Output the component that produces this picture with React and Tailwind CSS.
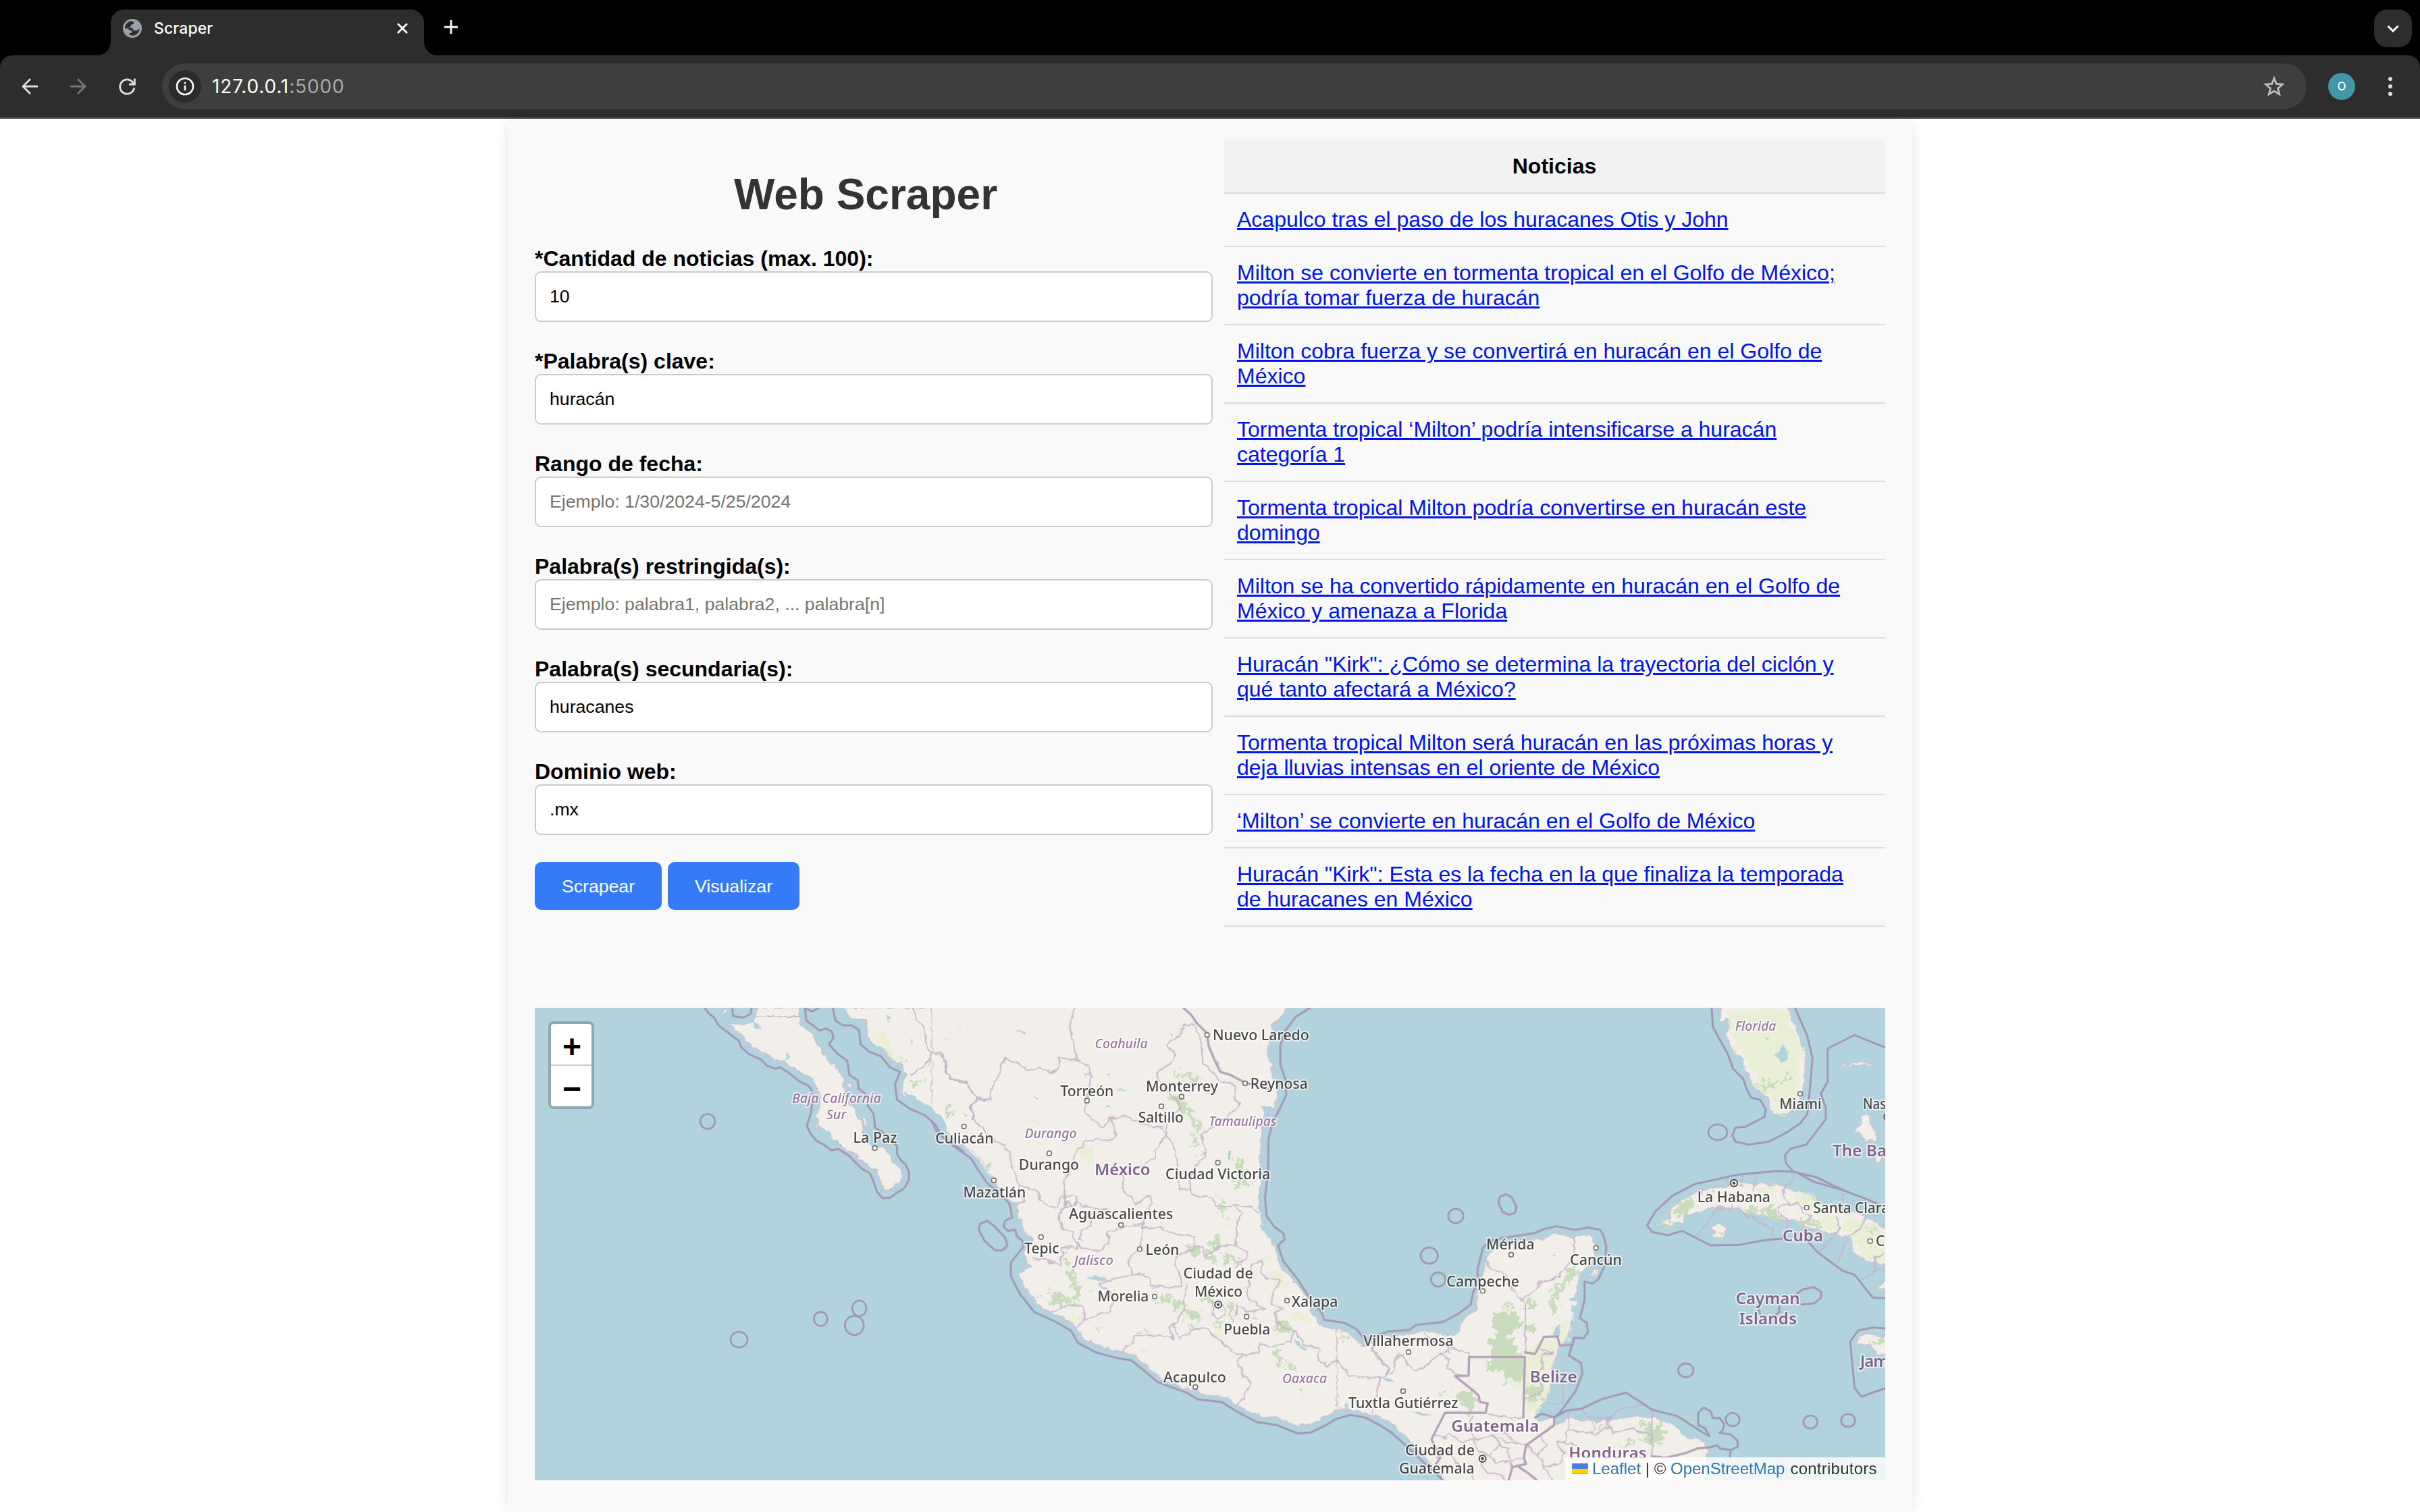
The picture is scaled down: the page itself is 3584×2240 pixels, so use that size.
import React from "react";

const WATER = "#b2d2dd";
const LAND = "#f2efea";

/* The map is charted in four overlapping sheets, each with its own grid. */
const SHEETS = {
  west: { x: -12, y: -13, sx: 0.43367, sy: 0.45918 },
  central: { x: 588, y: -13, sx: 0.43367, sy: 0.45918 },
  yucatan: { x: 1208, y: -13, sx: 0.33333, sy: 0.45918 },
  carib: { x: 1608, y: -13, sx: 0.33333, sy: 0.45918 },
};

const landmass = {
  west: [
    "M790 28H930L935 80 975 110 990 145 1012 170 1030 195 1050 215 1068 235 1080 265 1083 300 1100 340 1120 355 1135 385 1150 405 1148 430 1165 460 1180 485 1200 475 1215 480 1240 500 1255 530 1275 545 1282 570 1275 592 1250 605 1228 622 1212 605 1205 570 1190 548 1150 530 1110 495 1060 465 1020 440 995 405 990 380 1000 350 1003 310 990 275 965 250 920 230 885 200 850 200 825 180 790 165 750 140 745 122 690 85 720 80 745 85 775 72 785 55Z",
    "M1080 28L1105 60 1160 72 1158 110 1165 125 1200 155 1230 170 1245 195 1275 205 1300 245 1285 270 1283 310 1330 340 1380 360 1420 400 1470 460 1510 490 1550 530 1600 600V28Z",
    "M664 46L668 36 678 28 681 50 668 50Z",
    "M984 412L992 385 996 388 990 414Z",
    "M1095 282L1105 272 1112 280 1104 290Z",
    "M1146 385L1158 385 1162 405 1154 402Z",
  ],
  central: [
    "M0 20V365L25 390 45 410 50 425 90 460 140 490 170 525 200 570 225 600 250 640 285 655 300 710 320 755 345 770 335 790 315 820 320 845 340 860 325 872 295 885 310 925 350 965 375 1000 430 1020 495 1055 520 1100 600 1125 690 1150 740 1190 800 1235 880 1260 960 1280 1020 1290 1045 1310 1120 1345 1180 1350 1250 1378 1290 1375 1335 1352 1380 1330 1405 1318 1440 1320 1500 1330 1568 1365V1115L1530 1115 1470 1120 1445 1100 1410 1075 1370 1065 1330 1055 1300 1020 1285 970 1245 920 1195 870 1170 800 1150 760 1122 710 1118 650 1122 580 1122 500 1125 420 1140 370 1165 350 1185 305 1175 270 1160 230 1145 170 1155 120 1165 80 1190 60 1215 28V20Z",
  ],
  yucatan: [
    "M-60 1060L-10 1075 52 1120 100 1110 150 1090 250 1085 330 1070 400 1080 440 1060 490 1045 560 1000 570 940 590 880 608 830 640 800 700 790 760 778 830 778 915 755 985 770 1060 760 1090 790 1085 840 1040 870 1010 910 1000 960 1010 980 985 1030 965 1090 930 1115 905 1170 890 1230 870 1290 820 1335 840 1360 890 1355 905 1350 920 1375 970 1350 1060 1365 1150 1360 1240 1345 1340 1350 1430 1370 1480 1400 1570 1430 1582 1450 1575 1570H430L345 1490 260 1420 180 1368 120 1345-60 1315Z",
    "M1065 895L1080 872 1104 868 1085 895Z",
  ],
  carib: [
    "M445 20V50L440 75 470 60 495 75 480 95 465 110 480 140 510 175 535 195 550 230 575 245 585 285 640 300 665 345 680 375 750 370 790 350 805 315 820 240 820 180 795 130 770 80 740 20Z",
    "M150 728L225 710 225 680 260 650 340 625 400 610 480 605 530 590 600 598 650 600 720 600 770 620 830 630 880 660 960 675 1000 695 1060 690 1120 715 1180 745V855L1120 850 1070 835 1035 815 1020 765 980 760 900 750 830 735 790 715 720 710 660 700 600 690 550 690 530 675 440 670 400 672 350 690 290 695 280 720 255 720 230 730Z",
    "M402 738L440 722 470 742 462 770 405 768 420 752Z",
    "M1050 1108L1060 1090 1080 1085 1180 1088V1150L1140 1145 1110 1115 1060 1112Z",
    "M1070 372L1100 378 1115 410 1135 430 1130 460 1090 455 1065 435 1035 430 1065 410Z",
    "M965 205L1005 218 1040 204 1105 203 1122 218 1098 209 1040 213 1000 223Z",
    "M1130 505L1165 510 1155 530 1135 525Z",
    "M1140 935L1160 920 1180 905V940Z",
  ],
};

const woods = {
  west: ["M1305 275L1325 265 1345 258 1350 268 1330 282 1308 282Z", "M1435 345L1447 340 1450 372 1440 385 1428 370Z", "M1465 88L1480 88 1478 96Z", "M1280 195L1293 193 1290 205Z", "M1434 128L1444 128 1440 136Z"],
  central: [
    "M50 350L66 340 68 375 60 392 50 375Z", "M175 530L195 525 203 550 180 548Z",
    "M850 225L870 240 905 250 915 262 895 268 860 258Z", "M830 222L845 240 850 262 835 245Z",
    "M800 310L830 312 870 330 890 365 915 410 920 440 900 425 880 385 850 355 820 335Z",
    "M1040 508L1055 525 1070 555 1090 570 1085 605 1035 600 1030 585 1050 575 1035 545Z",
    "M978 625L992 650 1002 690 1002 728 990 690Z", "M905 495L925 500 915 522Z", "M888 435L910 460 912 480 893 460Z",
    "M865 805L900 790 925 800 930 820 890 822Z", "M945 785L965 755 985 775 980 808 955 805Z", "M985 815L1010 825 1055 840 1060 862 1010 850Z", "M940 815L970 820 975 840 945 845 925 830Z",
    "M445 840L470 850 470 866 450 862Z", "M465 880L490 880 498 920 512 960 490 985 478 950 482 920 465 900Z",
    "M400 940L430 945 450 958 475 962 478 985 430 985 395 972 420 962Z", "M345 960L375 962 365 970Z",
    "M775 950L800 945 812 965 800 1000 780 985 790 965Z", "M815 960L855 965 860 985 830 1005Z", "M760 975L775 980 765 990Z",
    "M870 1005L905 1005 935 1025 915 1038 885 1030Z", "M875 1055L905 1050 890 1072Z", "M850 1040L868 1045 860 1055Z",
    "M925 940L960 960 965 990 935 985Z", "M1015 975L1030 990 1032 1035 1020 1040 1010 1005Z",
    "M960 1040L985 1045 985 1070 968 1060Z",
    "M1170 1015L1195 1035 1235 1050 1230 1080 1180 1065Z", "M1172 1122L1190 1130 1198 1188 1178 1180Z",
    "M1200 1165L1235 1175 1245 1205 1225 1200Z", "M1238 1248L1272 1258 1265 1272Z", "M725 1060L752 1070 740 1080Z",
    "M560 1058L582 1062 570 1070Z", "M710 1142L735 1145 720 1150Z", "M1385 1078L1430 1095 1425 1102Z",
    "M540 938L558 940 545 944Z", "M1080 940L1100 952 1085 958Z", "M1100 1020L1120 1030 1105 1035Z",
  ],
  yucatan: [
    "M630 1045L640 1012 680 1010 700 1005 750 1020 755 1050 730 1080 705 1085 725 1110 750 1150 775 1165V1230H700L660 1195 625 1210 600 1195 625 1160 620 1100 655 1090 655 1075 630 1060Z",
    "M680 990L710 975 728 985 700 1000Z",
    "M470 1270L515 1260 562 1290 562 1310 530 1335 500 1322 500 1305 480 1300Z",
    "M780 968L828 972 826 992 795 1015 780 1012Z",
    "M945 885L1000 860 1022 878 985 905 960 925 945 905Z",
    "M925 915L955 930 935 945 920 965 890 965 890 945 915 935Z", "M880 968L920 970 915 990 920 1005 905 1022 880 1020 895 995Z",
    "M780 1045L820 1060 815 1082 780 1075Z", "M380 1262L422 1266 412 1273Z", "M885 820L918 822 900 825Z",
    "M1330 1365L1395 1385 1390 1420 1360 1440 1310 1430 1305 1405Z", "M1290 1370L1325 1358 1300 1395 1280 1405Z",
    "M1200 1445L1280 1410 1270 1425 1230 1450Z", "M1060 1385L1130 1372 1125 1380 1080 1392Z", "M1068 895L1082 875 1100 872 1085 893Z", "M1490 1350L1530 1355 1500 1360Z",
    "M780 1250L850 1240 850 1290 800 1310 780 1290Z",
  ],
  carib: [
    "M600 275L640 265 700 275 680 290 630 285Z", "M715 250L745 242 762 258 730 270Z", "M755 178L785 182 770 190Z",
    "M235 685L250 665 300 640 325 635 325 670 275 695 245 698Z", "M150 730L215 712 250 720 235 725 205 738 210 722Z",
    "M535 668L620 680 690 672 700 690 735 705 680 708 620 692 560 692Z", "M780 715L810 702 850 722 890 715 885 738 820 732Z",
    "M395 768L430 762 470 765 440 772Z", "M1095 745L1140 740 1130 765Z", "M1110 1100L1176 1095 1176 1110 1125 1115Z", "M1140 940L1176 930 1176 942Z", "M380 620L420 612 415 628Z",
  ],
};

const meadows = {
  west: ["M1180 110L1230 100 1240 150 1270 195 1245 195 1225 160 1190 140Z"],
  central: ["M480 490L520 470 555 485 550 525 510 515Z", "M335 375L365 390 380 410 345 400Z", "M1150 885L1180 880 1215 900 1225 930 1195 940 1165 905Z", "M1110 820L1150 828 1160 850 1130 850Z", "M1220 1010L1290 1020 1300 1035 1240 1040Z", "M970 1065L995 1070 990 1092 970 1085Z", "M480 1020L512 1025 505 1055 490 1045Z", "M840 980L870 985 880 1020 850 1025Z"],
  yucatan: [
    "M780 1140L850 1100 920 1095 900 1170 890 1230 865 1295 800 1345 775 1340Z",
    "M925 1035L980 1035 965 1090 945 1110 925 1080 900 1075 880 1080 905 1045Z",
    "M700 1230H770V1265L720 1245Z",
  ],
  carib: [
    "M470 40L560 35 680 28 740 35 760 90 790 140 805 170 790 240 790 290 760 340 700 370 680 360 670 320 600 290 590 260 620 250 560 215 560 190 520 160 500 120Z",
    "M700 235L780 245 770 290 745 310 700 325 680 320 730 290Z",
    "M600 610L680 602 700 640 640 640Z", "M780 625L860 640 900 670 890 690 800 650Z", "M1000 700L1176 750 1176 850 1100 840 1050 815 1030 770 990 755Z",
    "M880 690L960 700 960 750 900 745Z",
  ],
};

const lakes = {
  west: ["M768 60L785 80 805 88 803 97 778 92Z", "M888 172L895 190 882 200Z", "M1022 182L1045 210 1040 220 1025 200Z", "M1230 50L1245 62 1236 78Z", "M1370 190L1380 195 1374 222Z", "M1285 300L1350 330 1420 380 1435 415 1420 420 1370 360 1300 325Z", "M1000 410L1030 425 1045 450 1015 440Z", "M1310 130L1325 142 1318 147Z", "M1490 360L1502 372 1495 378Z"],
  central: ["M0 355L45 395 45 415 20 395Z", "M285 105H320L312 113Z", "M625 293H675L650 297Z", "M590 345H610V350H590Z", "M527 900L560 893 605 900 590 908 545 907Z", "M1240 1095L1282 1130 1275 1140 1240 1110Z", "M350 305L362 328 355 330Z", "M1010 490L1022 490 1022 515 1012 520Z", "M1125 345L1150 345 1165 350 1140 372Z", "M1120 720L1165 765 1160 775 1125 745Z", "M968 195L980 205 975 220Z", "M690 1075L712 1070 708 1078Z", "M305 850L338 855 325 870 305 868Z", "M750 928L785 930 780 936H755Z", "M812 110L826 115 820 122Z", "M595 240H610V245H595Z", "M525 240H540V245H525Z", "M445 815L462 812 462 820Z", "M1405 1310L1420 1302 1420 1325Z"],
  yucatan: ["M405 1080L445 1060 490 1048 490 1070 460 1085 410 1088Z", "M900 1080L915 1055 932 1048 930 1085 915 1090Z", "M135 1225L190 1225 192 1235 150 1230Z", "M670 1242L702 1240 680 1247Z", "M820 1345L850 1345 860 1365 835 1370Z", "M970 965L1010 965 1000 980 975 975Z", "M980 992L1005 990 1000 1008 985 1008Z", "M1460 1385L1500 1400 1500 1415 1465 1400Z", "M260 1330L330 1335 360 1350 300 1338Z"],
  carib: ["M680 177L708 168 715 150 725 155 745 175 740 195 715 205Z", "M640 125L655 122 652 135Z", "M1020 660L1070 665 1150 720 1120 715 1060 685Z", "M520 175L545 185 545 205 560 225 535 210Z", "M260 1385L290 1400 330 1410 325 1420 270 1405Z"],
};

const regional = {
  west: ["M790 57H930", "M1320 28L1322 50 1345 80 1360 105 1370 165 1385 175 1360 215 1340 225 1310 245", "M1385 175L1410 170 1430 200 1435 235 1450 262 1500 270 1520 300 1545 322 1568 325", "M1545 322L1517 340 1525 385 1568 430"],
  central: [
    "M490 28L472 70 480 110 487 160 495 195 437 190 430 220 410 240 390 228 365 225 330 230 290 208 250 190 235 220 225 260 205 285 200 325 155 318 130 285 115 265 65 262 45 210 40 190 25 180 0 165",
    "M155 318L133 340 140 385 185 430 215 460 250 470 265 505 275 545 290 580 300 600 300 635 320 655 290 658",
    "M495 195L535 215 545 255 535 290 530 340 520 360 560 400 585 415 610 385 660 380 700 395 740 405 785 415 800 440",
    "M610 385L625 410 628 450 525 458 500 490 485 505 485 545 455 570 450 620 460 660 430 715",
    "M800 440L785 460 760 490 760 510 720 540 650 565 655 620 695 660 715 655 745 635 750 660 720 725",
    "M800 440L830 480 835 550 845 610 880 615",
    "M905 95L890 82 860 85 845 120 805 145 805 160 830 170 825 200 765 240 800 290 850 350 800 400 805 440",
    "M905 95L920 150 925 200 950 230 985 265 1035 275 1037 330 1052 340 990 395 920 435 930 490 940 510 905 530 880 580 885 630 960 645 970 670 1030 670 1080 665 1115 690",
    "M1030 670L1060 690 1040 720 1045 760 1035 795 1080 820 1070 840 1045 850 1040 865",
    "M720 735L770 738 800 745 835 760 895 765 900 800 930 800 930 830 980 800 1035 795",
    "M300 600L360 620 370 650 400 670 430 670 440 640 490 635 495 660 440 680 430 715 450 740 480 750 490 785 500 805 445 800 440 860 380 840 340 840",
    "M490 785L515 805 565 812 605 790 600 750 640 740 720 725 715 790 680 830 670 850 685 890 740 895 745 920 790 930 850 930 850 895 830 860 835 830 900 800",
    "M540 690L545 730 510 750 500 775 518 780", "M450 640L475 670 500 650 515 668 545 672 600 680",
    "M685 890L610 905 570 920 610 945 620 980 600 1010 565 1020 525 1035 495 1055",
    "M410 1010L460 990 520 990 520 1035",
    "M870 920L860 990 840 1040 810 1055 825 1095 780 1085 690 1085 690 1105 660 1125 655 1140",
    "M820 1048L845 1095 900 1065 940 1060 960 1090 990 1100 1000 1120 1040 1145 1060 1150 1045 1165 1060 1210 1090 1240 1060 1290 1040 1310",
    "M1060 1150L1115 1140 1120 1110 1150 1125 1225 1105 1235 1070 1200 1060 1175 1040 1175 1010 1200 1000 1165 985 1165 950 1190 910 1150 905 1120 880 1130 845 1095 860 1080 930 1075 960 1135 1000 1080 1010 1040 985 1040 1020",
    "M1235 1070L1280 1120 1325 1125 1320 1165 1350 1185 1385 1165 1425 1215 1530 1225 1505 1330",
    "M960 970L960 1020 975 1030 1000 1020 995 985",
    "M1508 1110L1515 1150 1560 1190 1555 1215 1530 1225",
  ],
  yucatan: [
    "M100 1130L165 1190 160 1210 190 1200 210 1145 240 1145 250 1180 290 1200 340 1180 400 1145 440 1140V1120",
    "M390 1145L440 1165 430 1190 490 1215", "M325 1075L360 1100 440 1125 525 1142V1155",
    "M715 935L760 970 778 985V1140", "M760 970L820 940 850 910 925 895 975 850", "M998 770V820", "M608 830V860L650 880 690 885 715 935",
    "M945 1245V1305H880", "M835 1125L900 1140 850 1150 850 1190 835 1220 860 1260 780 1290", "M850 1150L905 1135",
    "M1025 1322L1050 1345 1150 1357 1190 1322 1310 1308", "M1340 1325V1475", "M970 1330L965 1390 945 1430 1010 1440",
    "M965 1390L1060 1400 1110 1400 1150 1380 1140 1360", "M1150 1380L1170 1400 1240 1385 1340 1410",
    "M360 1410L420 1415 440 1400 500 1430 550 1420 640 1410 700 1430 780 1440", "M550 1420L570 1460 620 1470 660 1440 640 1410", "M620 1470L650 1500 700 1490 720 1510",
    "M380 1480L440 1460 470 1500 530 1520 560 1560", "M540 1345L520 1390 560 1415", "M610 1340L690 1350 760 1350", "M580 1500L610 1530 660 1530 700 1560",
    "M780 1440L830 1470 870 1440 840 1410 905 1375", "M830 1470L860 1510 920 1500 950 1470 920 1430 945 1430", "M860 1510L900 1550", "M700 1370L680 1400 740 1430", "M660 1440L700 1450 710 1490 760 1480",
  ],
  carib: [
    "M355 595L363 630 340 625", "M345 765L425 678H495V665", "M470 575L480 600 540 605V570", "M530 685L675 742V775", "M598 565V598L590 620",
    "M767 562L765 590 725 610 730 640 755 665 700 670V690L740 710 742 740", "M755 665L790 655 810 690 850 700 820 720 810 760", "M960 700L970 740 940 770 885 820",
    "M1090 705L1060 745 1010 765 960 855", "M990 617L988 650", "M1176 815L1130 840 1127 875H1176", "M1127 875L1065 912",
  ],
};

const international = {
  central: ["M858 28L885 50 905 78 940 110 945 150 965 195 985 235 1020 245 1070 270 1150 290"],
  yucatan: [
    "M465 1217L525 1215 527 1155H775L768 1350", "M465 1217L540 1260 570 1280 575 1300 610 1305 600 1335H420L360 1420 400 1480 380 1500",
    "M775 1140L820 1145 860 1090 920 1088 930 1118 990 1115", "M905 1350L905 1375 780 1440 770 1480 780 1500 720 1510 700 1560", "M740 1505L790 1530 840 1560",
    "M1340 1475L1400 1480 1490 1465 1540 1450 1585 1448",
  ],
};

const maritime = {
  west: [
    "M608 28L620 45 640 60 655 85 690 110 725 135 732 155 760 178 800 195 820 215 850 225 865 220 895 238 930 265 960 278 972 292 978 320 970 370 957 410 970 435 990 458 1015 470 1040 488 1065 484 1100 505 1145 548 1172 562 1185 590 1195 620 1215 642 1240 642 1262 627 1290 610 1305 585 1306 560 1295 535 1278 520 1265 500V475L1245 455 1215 430 1190 415 1185 370 1165 345 1162 310 1135 290 1130 262 1102 245 1095 200 1060 175 1032 145 1048 125 1042 105 1022 95 1000 102 985 90 955 70 950 28",
    "M1045 28L1055 70 1080 85 1110 85 1135 100 1140 145 1170 170 1210 185 1240 220 1275 235 1258 275 1265 325 1310 355 1360 375 1395 405 1420 445 1490 490",
    "M702 28L705 55 740 60 765 48 768 28", "M955 32L975 40 998 28",
  ],
  central: [
    "M0 395L15 425 75 475 135 515 160 555 190 595 235 630 265 660 275 705 250 715 245 735 260 748 285 745 290 765 310 780 312 800 270 850 270 895 300 950 350 1010 420 1040 475 1070 500 1110 560 1140 640 1160 680 1165 720 1195 770 1235 870 1270 910 1292 990 1300 1040 1330 1110 1365 1180 1375 1250 1402 1295 1398 1340 1378 1380 1355 1430 1342 1480 1350 1530 1375 1568 1398",
    "M1292 28L1240 60 1205 105 1190 150V210L1208 260 1210 310 1190 350 1165 395 1150 450 1148 560 1138 640 1143 700 1170 735 1200 755 1205 775 1182 795 1200 845 1250 905 1290 965 1330 1010 1340 1035 1410 1045 1450 1065 1480 1100",
    "M160 745L165 725 190 715 215 735 250 770 258 795 240 812 215 810 180 780Z",
  ],
  yucatan: [
    "M180 1398L260 1450 340 1505 430 1565",
    "M66 1100L120 1085 170 1072 260 1068 290 1052 410 1042 480 1015 535 985 545 945 565 920V870L590 800 640 775 820 755 860 742 915 733 1000 745 1055 737 1110 745 1125 765 1137 800 1130 860 1100 905 1075 918 1040 912V970L1020 1030 1050 1045 1055 1075 1035 1095 995 1092 970 1150 1025 1175 1030 1210 1000 1265 930 1335 905 1350",
    "M820 1350L850 1338 905 1350 960 1328 1025 1322 1120 1290 1225 1270 1340 1325 1450 1345",
    "M657 655L665 637 690 630 715 638 738 670 730 690 705 696 675 687Z",
  ],
  carib: [
    "M250 1345L380 1405 395 1410 375 1385 345 1375V1335L370 1318 400 1330 410 1352 440 1352 460 1370 455 1390 440 1400 490 1405 520 1425V1445L490 1455 440 1450 430 1440 385 1448", "M490 1455L485 1480",
    "M405 28L410 90 440 130 475 175 500 225 545 258 560 290 580 318 620 325 645 355 640 380 555 412 510 415 497 440 510 460 570 470 660 460 740 430 800 400 830 370 840 300 853 190 830 120 775 28",
    "M1180 157L1110 137 1040 116 920 160V268L890 305 912 350V388L825 470 755 483 730 505 735 530 765 555",
    "M720 773L640 778 530 793 400 795 275 748 210 762 140 752 118 730 155 685 230 635 330 597 520 567 700 555 765 557 870 575 990 617 1090 645 1180 672", "M790 563L860 590 990 617", "M830 780L880 820 990 878 1040 890 1120 963 1180 966",
    "M785 950L810 937 860 930 892 945 890 965 860 982 805 985", "M608 990L620 1015 M705 990V1010L690 1018",
    "M1180 1063L1120 1060 1055 1070 1020 1105 1040 1255 1070 1283 1180 1255",
  ],
};

/* sheet, cx, cy, rx, ry */
const islets = [
  ["west", 618, 395, 25, 24], ["west", 1004, 1032, 23, 23], ["west", 1136, 998, 24, 25], ["west", 1119, 1053, 32, 31], ["west", 725, 1099, 29, 25],
  ["yucatan", 468, 700, 34, 23], ["yucatan", 350, 828, 38, 26], ["yucatan", 390, 905, 32, 23],
  ["carib", 432, 430, 42, 25], ["carib", 290, 1198, 34, 22], ["carib", 498, 1357, 31, 21], ["carib", 844, 1365, 31, 21], ["carib", 1011, 1360, 31, 21],
];

/* sheet, left, right, baseline, text, kind */
const labels = [
  ["west", 906, 1210, 336, "Baja California", "state"], ["west", 1023, 1092, 387, "Sur", "state"], ["west", 1115, 1265, 464, "La Paz", "city"],
  ["central", 557, 737, 159, "Coahuila", "state"], ["central", 959, 1289, 133, "Nuevo Laredo", "city"], ["central", 439, 621, 314, "Torreón", "city"],
  ["central", 731, 978, 298, "Monterrey", "city"], ["central", 1088, 1284, 289, "Reynosa", "city"], ["central", 705, 860, 398, "Saltillo", "city"],
  ["central", 946, 1177, 410, "Tamaulipas", "state"], ["central", 12, 211, 467, "Culiacán", "city"], ["central", 317, 495, 449, "Durango", "state"],
  ["central", 297, 503, 551, "Durango", "city"], ["central", 556, 746, 568, "México", "country"], ["central", 798, 1156, 581, "Ciudad Victoria", "city"],
  ["central", 107, 321, 640, "Mazatlán", "city"], ["central", 468, 824, 710, "Aguascalientes", "city"], ["central", 316, 435, 821, "Tepic", "city"],
  ["central", 730, 845, 826, "León", "city"], ["central", 486, 620, 857, "Jalisco", "state"], ["central", 859, 1097, 902, "Ciudad de", "city"],
  ["central", 897, 1061, 960, "México", "city"], ["central", 566, 741, 976, "Morelia", "city"], ["central", 1229, 1387, 993, "Xalapa", "city"],
  ["central", 997, 1156, 1082, "Puebla", "city"], ["central", 791, 1005, 1237, "Acapulco", "city"], ["central", 1197, 1349, 1240, "Oaxaca", "state"],
  ["yucatan", 603, 818, 807, "Mérida", "city"], ["yucatan", 975, 1206, 859, "Cancún", "city"], ["yucatan", 427, 750, 927, "Campeche", "city"],
  ["yucatan", 58, 458, 1120, "Villahermosa", "city"], ["yucatan", -9, 478, 1320, "Tuxtla Gutiérrez", "city"], ["yucatan", 797, 1007, 1238, "Belize", "country"],
  ["yucatan", 448, 838, 1396, "Guatemala", "country"], ["yucatan", 970, 1316, 1482, "Honduras", "country"], ["yucatan", 243, 552, 1472, "Ciudad de", "city"], ["yucatan", 216, 551, 1532, "Guatemala", "city"],
  ["carib", 509, 691, 103, "Florida", "state"], ["carib", 706, 893, 356, "Miami", "city"], ["carib", 1077, 1180, 356, "Nas", "city"],
  ["carib", 942, 1182, 507, "The Ba", "country"], ["carib", 341, 666, 655, "La Habana", "city"], ["carib", 856, 1194, 690, "Santa Clara", "city"],
  ["carib", 720, 900, 782, "Cuba", "country"], ["carib", 1134, 1174, 797, "C", "city"], ["carib", 512, 797, 984, "Cayman", "country"],
  ["carib", 527, 783, 1049, "Islands", "country"], ["carib", 1064, 1192, 1187, "Jam", "country"],
];

const towns = [
  ["west", 1189, 481], ["central", 110, 411], ["central", 530, 328], ["central", 853, 315], ["central", 784, 346], ["central", 940, 116], ["central", 1070, 272],
  ["central", 401, 498], ["central", 977, 528], ["central", 212, 585], ["central", 646, 729], ["central", 373, 768], ["central", 710, 807], ["central", 761, 960],
  ["central", 1213, 973], ["central", 1075, 1025], ["central", 900, 1252], ["yucatan", 714, 825], ["yucatan", 1091, 803], ["yucatan", 588, 942], ["yucatan", 258, 1139],
  ["yucatan", 234, 1265], ["carib", 798, 306], ["carib", 827, 673], ["carib", 1109, 781],
];
const capitals = [["central", 978, 986], ["yucatan", 587, 1483], ["carib", 504, 594], ["carib", 1186, 380]];

const place = (sheet, x, y) => {
  const s = SHEETS[sheet];
  return [s.x + x * s.sx, s.y + y * s.sy];
};

function Layer({ data, ...props }) {
  return Object.entries(data).map(([sheet, paths]) => {
    const s = SHEETS[sheet];
    return (
      <g key={sheet} transform={`translate(${s.x} ${s.y}) scale(${s.sx} ${s.sy})`} strokeLinejoin="round" strokeLinecap="round" {...props}>
        {paths.map((d) => <path key={d} d={d} vectorEffect="non-scaling-stroke" />)}
      </g>
    );
  });
}

const labelStyle = {
  city: { size: 22, fill: "#484a48", italic: "normal", weight: 500 },
  state: { size: 20.5, fill: "#9a78a0", italic: "italic", weight: 500 },
  country: { size: 24, fill: "#83658b", italic: "normal", weight: 600 },
};

function MapCanvas() {
  return (
    <svg width="2000" height="700" viewBox="0 0 2000 700" className="block" fontFamily="'Noto Sans', sans-serif">
      <defs>
        <filter id="rough" x="0" y="0" width="2000" height="700" filterUnits="userSpaceOnUse">
          <feTurbulence type="fractalNoise" baseFrequency="0.09" numOctaves="2" seed="4" result="n" />
          <feDisplacementMap in="SourceGraphic" in2="n" scale="9" xChannelSelector="R" yChannelSelector="G" />
        </filter>
        <filter id="patchy" x="0" y="0" width="2000" height="700" filterUnits="userSpaceOnUse">
          <feTurbulence type="fractalNoise" baseFrequency="0.11" numOctaves="3" seed="9" result="n" />
          <feDisplacementMap in="SourceGraphic" in2="n" scale="26" xChannelSelector="R" yChannelSelector="G" />
        </filter>
        {/* map tiles are drawn at half the screen's resolution */}
        <filter id="tile" x="0" y="0" width="2000" height="700" filterUnits="userSpaceOnUse">
          <feGaussianBlur stdDeviation="0.6" />
        </filter>
      </defs>
      <rect width="2000" height="700" fill={WATER} />
      <g filter="url(#tile)">
        <g filter="url(#rough)"><Layer data={landmass} fill={LAND} stroke="#cdbfd0" strokeWidth="1.2" /></g>
        <g filter="url(#patchy)">
          <Layer data={meadows} fill="#e6efcb" opacity="0.7" />
          <Layer data={woods} fill="#c5dab6" opacity="0.9" />
        </g>
        <g filter="url(#rough)"><Layer data={lakes} fill={WATER} /></g>
        <g filter="url(#rough)"><Layer data={regional} fill="none" stroke="#c6b3c9" strokeWidth="1.9" /></g>
        <Layer data={international} fill="none" stroke="#b5a2b8" strokeWidth="3.4" />
        <Layer data={maritime} fill="none" stroke="#a398b6" strokeWidth="3" />
        {islets.map(([s, x, y, rx, ry]) => {
          const [cx, cy] = place(s, x, y);
          return <ellipse key={`${s}${x}`} cx={cx} cy={cy} rx={rx * SHEETS[s].sx} ry={ry * SHEETS[s].sy} fill="none" stroke="#a398b6" strokeWidth="2.8" />;
        })}
        {towns.map(([s, x, y]) => {
          const [cx, cy] = place(s, x, y);
          return <rect key={`${s}${x}`} x={cx - 3.2} y={cy - 3.2} width="6.4" height="6.4" rx="2.4" fill="#fff" stroke="#73736f" strokeWidth="1.7" />;
        })}
        {capitals.map(([s, x, y]) => {
          const [cx, cy] = place(s, x, y);
          return (
            <g key={`${s}${x}`}>
              <circle cx={cx} cy={cy} r="5" fill="#f2efea" stroke="#4c4c4c" strokeWidth="1.9" />
              <circle cx={cx} cy={cy} r="2.1" fill="#3d3d3d" />
            </g>
          );
        })}
        {labels.map(([s, x1, x2, y, text, kind]) => {
          const [x, base] = place(s, x1, y);
          const st = labelStyle[kind];
          return (
            <text key={`${text}${x1}`} x={x} y={base} fontSize={st.size} fontStyle={st.italic} fontWeight={st.weight} fill={st.fill}
              stroke="#ffffff" strokeOpacity="0.65" strokeWidth="4" strokeLinejoin="round" paintOrder="stroke"
              textLength={(x2 - x1) * SHEETS[s].sx} lengthAdjust={kind === "country" ? "spacing" : "spacingAndGlyphs"}>
              {text}
            </text>
          );
        })}
      </g>
    </svg>
  );
}

function BrowserChrome() {
  return (
    <header className="h-[176px] bg-black font-[Inter,sans-serif]">
      <div className="flex h-[82px] items-end justify-between pr-3 pl-[144px]">
        <div className="flex items-end">
          <svg width="20" height="20" viewBox="0 0 20 20"><path d="M20 0V20H0A20 20 0 0 0 20 0Z" fill="#2d2d2d" /></svg>
          <div className="flex h-[68px] w-[464px] items-center rounded-t-[20px] bg-[#2d2d2d] pr-6 pb-3 pl-[18px]">
            <svg width="28" height="28" viewBox="0 0 28 28">
              <circle cx="14" cy="14" r="14" fill="#9aa0aa" />
              <path d="M3 12.5C4 7 8 3.5 13 3.2L16 4.5 16 7.5 12.5 8.5 11 12 7 12.8 14 13 15.5 17 21 17.2 24.8 14.5C24.3 20.5 19.5 25 13.8 24.8L9.5 23.5 9.8 21 13.5 20.5 13 17.5 9 16.2 7.5 14.2 3 14.3Z" fill="#2d2d2d" />
            </svg>
            <span className="ml-[18px] text-[23px] leading-7 font-medium tracking-[0.1px] text-white">Scraper</span>
            <svg className="ml-auto" width="16" height="16" viewBox="0 0 16 16" stroke="#fff" strokeWidth="2.8"><path d="M1 1 15 15M15 1 1 15" /></svg>
          </div>
          <svg width="20" height="20" viewBox="0 0 20 20"><path d="M0 0V20H20A20 20 0 0 1 0 0Z" fill="#2d2d2d" /></svg>
          <svg className="mb-8 ml-[10px]" width="20" height="20" viewBox="0 0 20 20" stroke="#fff" strokeWidth="2.8"><path d="M10 0V20M0 10H20" /></svg>
        </div>
        <div className="mb-3 flex h-14 w-14 items-center justify-center rounded-[20px] bg-[#2d2d2d]">
          <svg width="18" height="11" viewBox="0 0 18 11" fill="none" stroke="#fff" strokeWidth="3"><path d="M1.5 1.5 9 9 16.5 1.5" /></svg>
        </div>
      </div>
      <div className="flex h-[94px] items-center rounded-t-[18px] border-b-2 border-[#565656] bg-[#2d2d2d] pl-8">
        <svg width="24" height="24" viewBox="0 0 24 24" fill="none" stroke="#dedede" strokeWidth="2.8"><path d="M24 12H2M13 1 2 12 13 23" /></svg>
        <svg className="ml-12" width="24" height="24" viewBox="0 0 24 24" fill="none" stroke="#777" strokeWidth="2.8"><path d="M0 12H22M11 1 22 12 11 23" /></svg>
        <svg className="ml-12" width="25" height="25" viewBox="0 0 25 25" fill="none" stroke="#dedede" strokeWidth="2.8"><path d="M22.8 14A10.6 10.6 0 1 1 20 5.2L23 8.5M23.4 .5V9H15" /></svg>
        <div className="ml-[39px] flex h-[68px] w-[3176px] items-center rounded-full bg-[#3e3e3e] pr-8 pl-[10px]">
          <div className="flex h-12 w-12 items-center justify-center rounded-full bg-[#2b2b2b]">
            <svg width="28" height="28" viewBox="0 0 28 28" fill="none" stroke="#fff" strokeWidth="2.6"><circle cx="14" cy="14" r="12" /><path d="M14 12.5V20M14 7.6V10.3" /></svg>
          </div>
          <span className="ml-4 text-[28px] leading-8 tracking-[0.85px] text-white">127.0.0.1<span className="text-[#a9a9a9]">:5000</span></span>
          <svg className="ml-auto" width="32" height="32" viewBox="0 0 32 32" fill="none" stroke="#bdbdbd" strokeWidth="2.8"><path d="M16 4 19.4 12.4 28.4 13 21.5 18.9 23.7 27.6 16 22.8 8.3 27.6 10.5 18.9 3.6 13 12.6 12.4Z" /></svg>
        </div>
        <div className="ml-8 flex h-10 w-10 items-center justify-center rounded-full bg-[#4296a8] text-[17px] leading-none font-medium text-white">O</div>
        <svg className="ml-[49px]" width="6" height="28" viewBox="0 0 6 28" fill="#dedede"><circle cx="3" cy="3" r="3" /><circle cx="3" cy="14" r="3" /><circle cx="3" cy="25" r="3" /></svg>
      </div>
    </header>
  );
}

const fields = [
  { label: "*Cantidad de noticias (max. 100):", value: "10" },
  { label: "*Palabra(s) clave:", value: "huracán" },
  { label: "Rango de fecha:", placeholder: "Ejemplo: 1/30/2024-5/25/2024" },
  { label: "Palabra(s) restringida(s):", placeholder: "Ejemplo: palabra1, palabra2, ... palabra[n]" },
  { label: "Palabra(s) secundaria(s):", value: "huracanes" },
  { label: "Dominio web:", value: ".mx" },
];

const news = [
  ["Acapulco tras el paso de los huracanes Otis y John"],
  ["Milton se convierte en tormenta tropical en el Golfo de México;", "podría tomar fuerza de huracán"],
  ["Milton cobra fuerza y se convertirá en huracán en el Golfo de", "México"],
  ["Tormenta tropical ‘Milton’ podría intensificarse a huracán", "categoría 1"],
  ["Tormenta tropical Milton podría convertirse en huracán este", "domingo"],
  ["Milton se ha convertido rápidamente en huracán en el Golfo de", "México y amenaza a Florida"],
  ["Huracán \"Kirk\": ¿Cómo se determina la trayectoria del ciclón y", "qué tanto afectará a México?"],
  ["Tormenta tropical Milton será huracán en las próximas horas y", "deja lluvias intensas en el oriente de México"],
  ["‘Milton’ se convierte en huracán en el Golfo de México"],
  ["Huracán \"Kirk\": Esta es la fecha en la que finaliza la temporada", "de huracanes en México"],
];

export default function App() {
  return (
    <div className="flex h-[2240px] w-[3584px] flex-col overflow-hidden bg-white font-['Liberation_Sans',Arial,sans-serif] text-black">
      <BrowserChrome />
      <main className="mx-auto h-[2064px] w-[2080px] rounded-t-[16px] bg-[#f9f9f9] px-10 pt-8 shadow-[0_0_20px_rgba(0,0,0,0.1)]">
        <div className="flex h-[1285px] items-start justify-between">
          <form className="flex w-[1004px] flex-col pt-[43px]" onSubmit={(e) => e.preventDefault()}>
            <h1 className="mb-10 w-[980px] text-center text-[64px] leading-[74px] font-bold text-[#333]">Web Scraper</h1>
            {fields.map((f) => (
              <label key={f.label} className="mb-10 block">
                <span className="block h-[37px] text-[32px] leading-[37px] font-bold">{f.label}</span>
                <input
                  className="block h-[75px] w-full rounded-[9px] border-2 border-[#ccc] bg-white px-5 text-[26.67px] text-black placeholder:text-[#757575]"
                  defaultValue={f.value}
                  placeholder={f.placeholder}
                />
              </label>
            ))}
            <div className="flex gap-[9px]">
              <button className="h-[71px] w-[188px] rounded-[10px] bg-[#347cf7] text-[26.67px] text-white">Scrapear</button>
              <button className="h-[71px] w-[195px] rounded-[10px] bg-[#347cf7] text-[26.67px] text-white">Visualizar</button>
            </div>
          </form>
          <table className="w-[980px] border-collapse text-[32px] leading-[37px]">
            <thead>
              <tr><th className="border-b-2 border-[#ddd] bg-[#f2f2f2] p-5 text-center font-bold">Noticias</th></tr>
            </thead>
            <tbody>
              {news.map((lines) => (
                <tr key={lines[0]}>
                  <td className="border-b-2 border-[#ddd] p-5 whitespace-nowrap">
                    <a href="#" className="text-[#0014ec] underline decoration-[3px]">
                      {lines[0]}
                      {lines[1] && <br />}
                      {lines[1]}
                    </a>
                  </td>
                </tr>
              ))}
            </tbody>
          </table>
        </div>
        <section className="relative h-[700px] w-[2000px] overflow-hidden">
          <MapCanvas />
          <div className="absolute top-5 left-5 flex w-[68px] flex-col rounded-lg border-4 border-black/20 bg-white bg-clip-padding text-center text-[48px] leading-[50px] font-bold">
            <button className="flex h-[62px] items-center justify-center border-b-2 border-[#ccc] pt-2 pl-0.5">+</button>
            <button className="flex h-[60px] items-center justify-center pt-2 pl-0.5">−</button>
          </div>
          <div className="absolute right-0 bottom-0 flex h-[34px] w-[474px] items-center bg-white/80 pl-[10px] text-[24px] leading-[34px] whitespace-pre text-[#333]">
            <svg className="mr-[6px]" width="24" height="16" viewBox="0 0 12 8"><path fill="#4c7be1" d="M0 0h12v4H0z" /><path fill="#ffd500" d="M0 4h12v3H0z" /><path fill="#e0bc00" d="M0 7h12v1H0z" /></svg>
            <a href="#" className="text-[#2f78ad]">Leaflet</a>
            <span>{" | © "}</span>
            <a href="#" className="text-[#2f78ad]">OpenStreetMap</a>
            <span className="ml-2 tracking-[0.25px]">contributors</span>
          </div>
        </section>
      </main>
    </div>
  );
}
